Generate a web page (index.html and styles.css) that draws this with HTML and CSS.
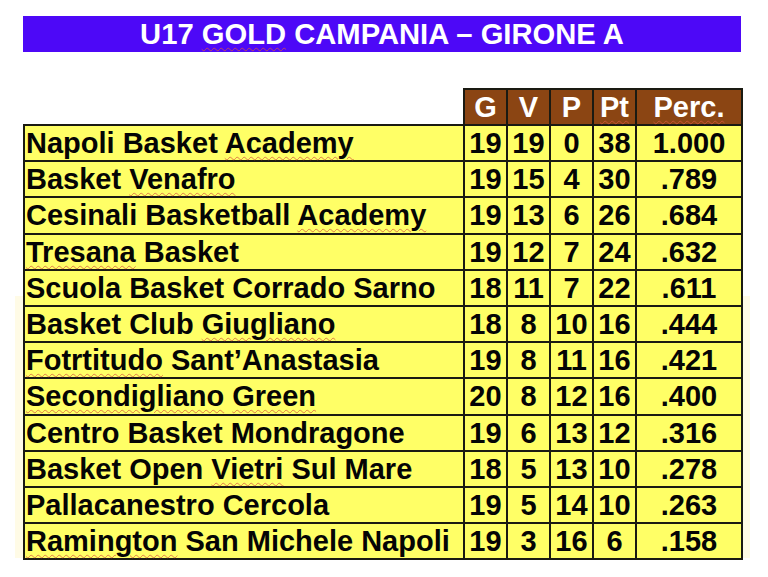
FILE: index.html
```html
<!DOCTYPE html>
<html lang="it">
<head>
<meta charset="utf-8">
<title>U17 Gold Campania – Girone A</title>
<link rel="stylesheet" href="styles.css">
</head>
<body>
<div class="page">
  <h1 class="title">U17 <span class="sp">GOLD</span> CAMPANIA – GIRONE A</h1>
  <div class="board">
    <table class="standings">
      <colgroup>
        <col class="c-name"><col class="c-num"><col class="c-num"><col class="c-num"><col class="c-num"><col class="c-perc">
      </colgroup>
      <thead>
        <tr>
          <th class="blank"></th>
          <th>G</th><th>V</th><th>P</th><th><span class="sp">Pt</span></th><th><span class="sp">Perc.</span></th>
        </tr>
      </thead>
      <tbody>
        <tr><td class="name">Napoli Basket <span class="sp">Academy</span></td><td>19</td><td>19</td><td>0</td><td>38</td><td>1.000</td></tr>
        <tr><td class="name">Basket <span class="sp">Venafro</span></td><td>19</td><td>15</td><td>4</td><td>30</td><td>.789</td></tr>
        <tr><td class="name">Cesinali Basketball <span class="sp">Academy</span></td><td>19</td><td>13</td><td>6</td><td>26</td><td>.684</td></tr>
        <tr><td class="name"><span class="sp">Tresana</span> Basket</td><td>19</td><td>12</td><td>7</td><td>24</td><td>.632</td></tr>
        <tr><td class="name">Scuola Basket Corrado Sarno</td><td>18</td><td>11</td><td>7</td><td>22</td><td>.611</td></tr>
        <tr><td class="name">Basket Club <span class="sp">Giugliano</span></td><td>18</td><td>8</td><td>10</td><td>16</td><td>.444</td></tr>
        <tr><td class="name"><span class="sp">Fotrtitudo</span> Sant’Anastasia</td><td>19</td><td>8</td><td>11</td><td>16</td><td>.421</td></tr>
        <tr><td class="name"><span class="sp">Secondigliano</span> <span class="sp">Green</span></td><td>20</td><td>8</td><td>12</td><td>16</td><td>.400</td></tr>
        <tr><td class="name">Centro Basket Mondragone</td><td>19</td><td>6</td><td>13</td><td>12</td><td>.316</td></tr>
        <tr><td class="name">Basket Open <span class="sp">Vietri</span> Sul Mare</td><td>18</td><td>5</td><td>13</td><td>10</td><td>.278</td></tr>
        <tr><td class="name">Pallacanestro Cercola</td><td>19</td><td>5</td><td>14</td><td>10</td><td>.263</td></tr>
        <tr><td class="name"><span class="sp">Ramington</span> San Michele Napoli</td><td>19</td><td>3</td><td>16</td><td>6</td><td>.158</td></tr>
      </tbody>
    </table>
  </div>
</div>
</body>
</html>
```

FILE: styles.css
```css
* { box-sizing: border-box; }

html, body {
  margin: 0;
  padding: 0;
  background: #ffffff;
}

body {
  font-family: "Liberation Sans", Arial, sans-serif;
  font-weight: bold;
  color: #050505;
}

.page {
  width: 768px;
  height: 577px;
  padding: 16px 0 0 0;
  overflow: hidden;
}

.title {
  margin: 0 0 0 23px;
  width: 718px;
  height: 36px;
  background: #4d08f7;
  color: #ffffff;
  font-size: 29.2px;
  line-height: 36px;
  font-weight: bold;
  text-align: center;
}

.board {
  margin-top: 36px;
  margin-left: 15px;
  width: 735px;
  padding: 0 8px;
  background: linear-gradient(#ffffff 0, #ffffff 208px, #fffbe6 208px, #fffbe6 470px, #ffffff 470px);
}

.standings {
  border-collapse: collapse;
  table-layout: fixed;
  width: 719px;
  font-size: 29px;
}

.c-name { width: 440px; }
.c-num { width: 43px; }
.c-perc { width: 106px; }

.standings th,
.standings td {
  height: 36.2px;
  padding: 0;
  border: 2px solid #1a1a12;
  text-align: center;
  vertical-align: middle;
  line-height: 30px;
  white-space: nowrap;
}

.standings th {
  background: #8b4513;
  color: #ffffff;
  height: 36px;
}

.standings th.blank {
  background: transparent;
  border: none;
}

.standings td {
  background: #ffff66;
}

.standings td.name {
  text-align: left;
  padding-left: 1px;
}

.sp {
  text-decoration: underline wavy rgba(214, 86, 60, 0.75);
  text-decoration-thickness: 1px;
  text-underline-offset: 3px;
}
```
